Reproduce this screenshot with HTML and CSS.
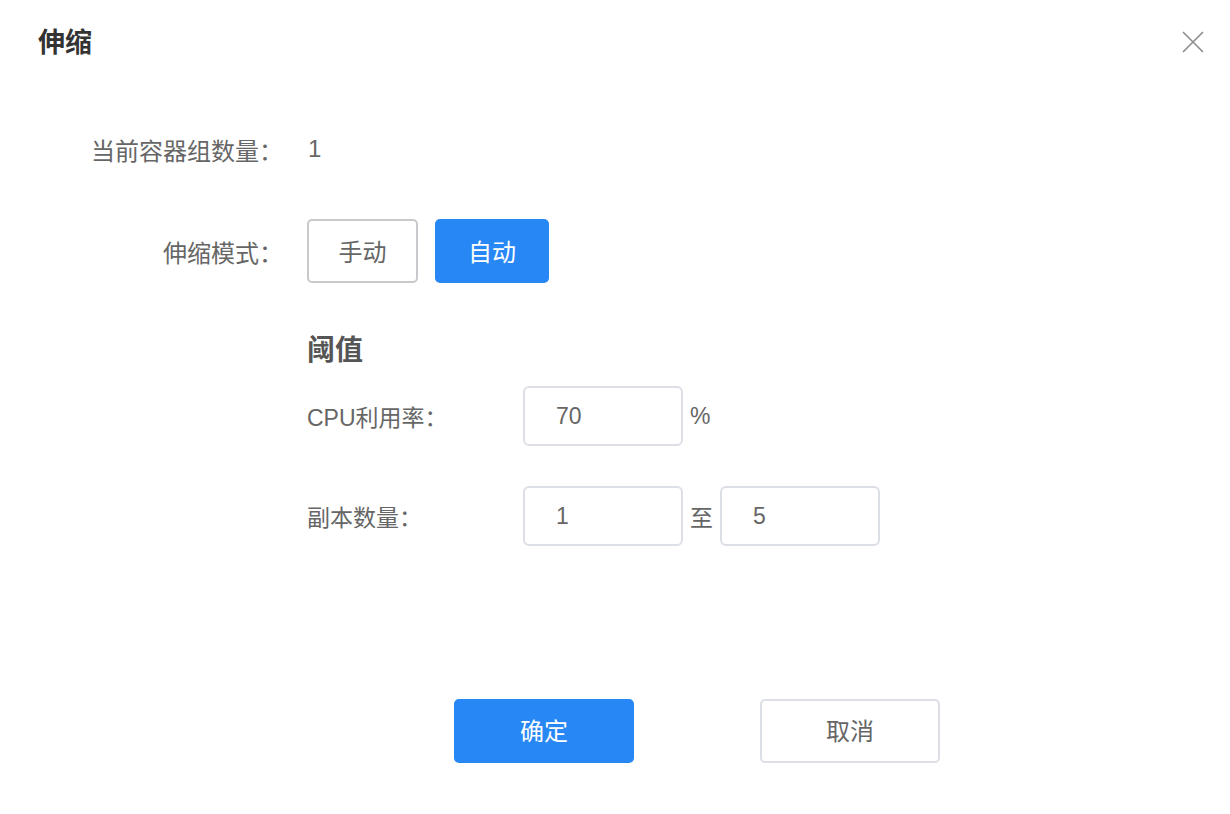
FILE: index.html
```html
<!DOCTYPE html>
<html lang="zh-CN">

<head>
  <meta charset="UTF-8" />
  <meta name="viewport" content="width=device-width, initial-scale=1.0" />
  <title>伸缩</title>

  <link rel="stylesheet" href="styles.css">
</head>

<body>
  <div class="dialog">
    <div class="dialog-header">
      <span class="dialog-title">伸缩</span>
      <span class="dialog-close">
        <svg width="22" height="22" viewBox="0 0 22 22">
          <path d="M1 1 L21 21 M21 1 L1 21" stroke="#8c8c8c" stroke-width="1.6" fill="none" />
        </svg>
      </span>
    </div>

    <div class="form">
      <div class="form-row row-count">
        <label class="form-label">当前容器组数量：</label>
        <span class="form-value">1</span>
      </div>

      <div class="form-row row-mode">
        <label class="form-label">伸缩模式：</label>
        <div class="mode-group">
          <button class="btn btn-plain mode-btn">手动</button>
          <button class="btn btn-primary mode-btn mode-auto">自动</button>
        </div>
      </div>

      <div class="threshold">
        <h3 class="threshold-title">阈值</h3>

        <div class="sub-row">
          <label class="sub-label">CPU利用率：</label>
          <input class="num-input" type="text" value="70">
          <span class="unit">%</span>
        </div>

        <div class="sub-row row-replica">
          <label class="sub-label">副本数量：</label>
          <input class="num-input" type="text" value="1">
          <span class="unit">至</span>
          <input class="num-input" type="text" value="5">
        </div>
      </div>
    </div>

    <div class="dialog-footer">
      <button class="btn btn-primary footer-btn">确定</button>
      <button class="btn btn-plain footer-btn btn-cancel">取消</button>
    </div>
  </div>
</body>

</html>
```

FILE: styles.css
```css
* {
  box-sizing: border-box;
}

body {
  margin: 0;
  background-color: #fff;
  font-family: "Liberation Sans", "Noto Sans CJK SC", sans-serif;
  color: #666;
}

.dialog {
  position: relative;
  width: 1230px;
  height: 814px;
}

.dialog-header {
  padding: 27px 38px 0;
  height: 59px;
}

.dialog-title {
  font-size: 27px;
  line-height: 32px;
  font-weight: 700;
  color: #333;
}

.dialog-close {
  position: absolute;
  top: 31px;
  right: 26px;
  width: 22px;
  height: 22px;
}

.form {
  margin-top: 70px;
}

.form-row {
  display: flex;
  align-items: center;
}

.row-count {
  height: 40px;
}

.row-mode {
  margin-top: 50px;
  height: 64px;
}

.form-label {
  width: 283px;
  text-align: right;
  font-size: 24px;
  color: #666;
}

.form-value {
  margin-left: 25px;
  font-size: 24px;
  color: #666;
}

.mode-group {
  display: flex;
  gap: 17px;
  margin-left: 24px;
}

.btn {
  font-family: inherit;
  border-radius: 5px;
  cursor: pointer;
}

.btn-plain {
  background: #fff;
  border: 2px solid #dcdfe6;
  color: #666;
}

.btn-primary {
  background: #2787f5;
  border: 2px solid #2787f5;
  color: #fff;
}

.mode-btn {
  width: 111px;
  height: 64px;
  padding-bottom: 3px;
  font-size: 24px;
}

.mode-btn.btn-plain {
  border-color: #c8c9cc;
}

.mode-auto {
  width: 114px;
}

.threshold {
  margin-left: 307px;
  margin-top: 52px;
}

.threshold-title {
  margin: 0;
  font-size: 28px;
  line-height: 32px;
  font-weight: 700;
  color: #555;
}

.sub-row {
  display: flex;
  align-items: center;
  margin-top: 19px;
  height: 60px;
}

.row-replica {
  margin-top: 40px;
}

.sub-label {
  width: 216px;
  font-size: 23px;
  color: #666;
}

.num-input {
  width: 160px;
  height: 60px;
  border: 2px solid #dcdfe6;
  border-radius: 6px;
  padding-left: 31px;
  font-family: inherit;
  font-size: 23px;
  color: #666;
  outline: none;
}

.unit {
  margin: 0 7px 0 7px;
  font-size: 23px;
  color: #666;
}

.dialog-footer {
  display: flex;
  gap: 126px;
  margin-top: 153px;
  padding-left: 454px;
}

.footer-btn {
  width: 180px;
  height: 64px;
  padding-bottom: 5px;
  font-size: 24px;
}

.btn-cancel {
  color: #666;
}
```
